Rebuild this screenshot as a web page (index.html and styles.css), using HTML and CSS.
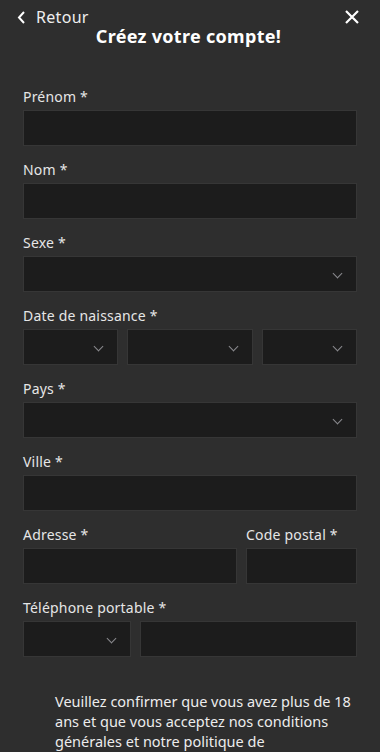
FILE: index.html
```html
<!DOCTYPE html>
<html lang="fr">
<head>
    <meta charset="UTF-8">
    <meta name="viewport" content="width=device-width, initial-scale=1.0">
    <title>Créez votre compte</title>
    <link rel="stylesheet" href="styles.css">
</head>
<body>
    <div class="header">
        <div class="topbar">
            <a class="back" href="#">
                <svg width="9" height="13" viewBox="0 0 9 13"><polyline points="7,1 2,6.5 7,12" fill="none" stroke="#fff" stroke-width="2"/></svg>
                Retour
            </a>
            <a class="close" href="#">
                <svg width="16" height="16" viewBox="0 0 16 16"><path d="M2 2L14 14M14 2L2 14" stroke="#fff" stroke-width="2.2"/></svg>
            </a>
        </div>
        <h1>Créez votre compte!</h1>
    </div>

    <form class="form">
        <div class="field">
            <label>Prénom *</label>
            <div class="input"></div>
        </div>
        <div class="field">
            <label>Nom *</label>
            <div class="input"></div>
        </div>
        <div class="field">
            <label>Sexe *</label>
            <div class="input select"></div>
        </div>
        <div class="field">
            <label>Date de naissance *</label>
            <div class="row">
                <div class="input select w3"></div>
                <div class="input select w4"></div>
                <div class="input select w3"></div>
            </div>
        </div>
        <div class="field">
            <label>Pays *</label>
            <div class="input select"></div>
        </div>
        <div class="field">
            <label>Ville *</label>
            <div class="input"></div>
        </div>
        <div class="row addr-row">
            <div class="field">
                <label>Adresse *</label>
                <div class="input"></div>
            </div>
            <div class="field">
                <label>Code postal *</label>
                <div class="input"></div>
            </div>
        </div>
        <div class="field">
            <label>Téléphone portable *</label>
            <div class="row phone-row">
                <div class="input select"></div>
                <div class="input"></div>
            </div>
        </div>

        <p class="confirm">Veuillez confirmer que vous avez plus de 18 ans et que vous acceptez nos conditions générales et notre politique de confidentialité.</p>
    </form>
</body>
</html>
```

FILE: styles.css
```css
* {
    margin: 0;
    padding: 0;
    box-sizing: border-box;
    font-family: "Noto Sans", "DejaVu Sans", sans-serif;
}
body {
    background-color: #2e2e2e;
    color: #e8e8e8;
    height: 752px;
    overflow: hidden;
}
a {
    color: #fff;
    text-decoration: none;
}

/* Header */
.header {
    padding: 7px 20px 0 17px;
}
.topbar {
    display: flex;
    justify-content: space-between;
    align-items: center;
    height: 20px;
}
.back {
    display: flex;
    align-items: center;
    gap: 10px;
    font-size: 16px;
    letter-spacing: 0.3px;
    color: #eee;
}
.close {
    display: flex;
}
.header h1 {
    margin-top: -2px;
    text-align: center;
    font-size: 18px;
    line-height: 22px;
    font-weight: bold;
    letter-spacing: 0.3px;
    color: #fff;
}

/* Form */
.form {
    padding: 41px 23px 0;
}
.field {
    margin-bottom: 15px;
}
.field label {
    display: block;
    font-size: 14px;
    line-height: 18px;
    letter-spacing: 0.2px;
    margin-bottom: 4px;
    color: #e6e6e6;
}
.input {
    position: relative;
    height: 36px;
    background: #1c1c1c;
    border: 1px solid #363636;
}
.select::after {
    content: "";
    position: absolute;
    right: 15px;
    top: 13px;
    width: 6px;
    height: 6px;
    border-right: 1.5px solid #8a8a8e;
    border-bottom: 1.5px solid #8a8a8e;
    transform: rotate(45deg);
}
.row {
    display: flex;
    gap: 9px;
}
.addr-row {
    display: grid;
    grid-template-columns: 1fr 111px;
}
.phone-row {
    display: grid;
    grid-template-columns: 108px 1fr;
}
.w3 { flex: 3; }
.w4 { flex: 4; }

.confirm {
    margin-top: 34px;
    padding-left: 32px;
    font-size: 14.5px;
    line-height: 20px;
    color: #ececec;
}
```
